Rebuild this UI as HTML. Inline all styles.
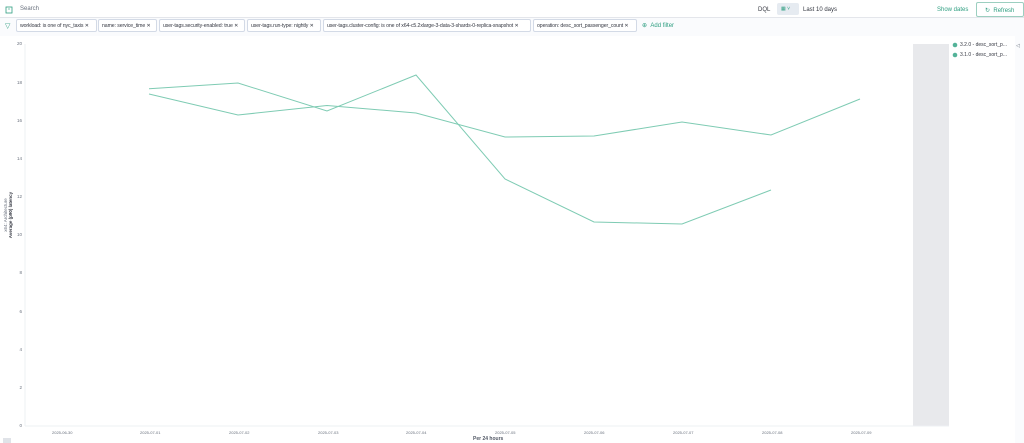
<!DOCTYPE html>
<html><head><meta charset="utf-8"><style>
*{margin:0;padding:0;box-sizing:border-box}
body{width:1024px;height:443px;overflow:hidden;background:#fff;font-family:"Liberation Sans",sans-serif;color:#343741;position:relative}
.top{position:absolute;left:0;top:0;width:1024px;height:18px;border-bottom:1px solid #e4e6eb;background:#fff}
.fil{position:absolute;left:0;top:18px;width:1024px;height:18px;background:#fafbfd}
.pill{position:absolute;top:1px;height:13px;border:1px solid #d3dae6;border-radius:2px;background:#fff;font-size:5.2px;line-height:12px;padding:0 3px;color:#343741;white-space:nowrap;overflow:hidden;letter-spacing:-0.1px}
.t{position:absolute;font-size:6px;white-space:nowrap}
.yl{position:absolute;left:14px;font-size:4.5px;color:#69707d;width:8px;text-align:right}
.xl{position:absolute;top:430px;font-size:4px;color:#69707d}
</style></head><body>
<div class="top">
 <svg style="position:absolute;left:5px;top:6px" width="8" height="8"><rect x="1" y="1" width="6" height="6" fill="none" stroke="#2e9e80" stroke-width="0.8"/><line x1="3" y1="3" x2="5" y2="3" stroke="#2e9e80" stroke-width="0.6"/></svg>
 <div class="t" style="left:20px;top:6px;color:#69707d">Search</div>
 <div class="t" style="left:758px;top:7px;color:#343741">DQL</div>
 <div style="position:absolute;left:777px;top:3px;width:22px;height:12px;background:#e6ebf1;border-radius:2px"></div>
 <div class="t" style="left:781px;top:6px;color:#2e9e80;font-size:5px">▦ ˅</div>
 <div class="t" style="left:803px;top:7px">Last 10 days</div>
 <div class="t" style="left:937px;top:7px;color:#2e9e80">Show dates</div>
 <div style="position:absolute;left:976px;top:2px;width:48px;height:15px;border:1px solid #9ccfc0;border-radius:2px"></div>
 <div class="t" style="left:985px;top:7px;color:#2e9e80">↻ &nbsp;Refresh</div>
</div>
<div class="fil">
 <div class="t" style="left:5px;top:4px;color:#2e9e80;font-size:7px">▽</div>
 <div class="pill" style="left:16px;width:81px">workload: is one of nyc_taxis ✕</div>
 <div class="pill" style="left:98px;width:59px">name: service_time ✕</div>
 <div class="pill" style="left:159px;width:86px">user-tags.security-enabled: true ✕</div>
 <div class="pill" style="left:247px;width:74px">user-tags.run-type: nightly ✕</div>
 <div class="pill" style="left:323px;width:208px">user-tags.cluster-config: is one of x64-c5.2xlarge-3-data-3-shards-0-replica-snapshot ✕</div>
 <div class="pill" style="left:533px;width:104px">operation: desc_sort_passenger_count ✕</div>
 <div class="t" style="left:642px;top:4px;color:#2e9e80">⊕ &nbsp;Add filter</div>
</div>
<div style="position:absolute;left:1015px;top:36px;width:9px;height:407px;background:#fafbfd"></div>
<div class="t" style="left:1016px;top:43px;color:#69707d;font-size:5px">◁</div>
<div class="yl" style="top:41px">20</div><div class="yl" style="top:80px">18</div><div class="yl" style="top:118px">16</div><div class="yl" style="top:156px">14</div><div class="yl" style="top:194px">12</div><div class="yl" style="top:232px">10</div><div class="yl" style="top:270px">8</div><div class="yl" style="top:309px">6</div><div class="yl" style="top:347px">4</div><div class="yl" style="top:385px">2</div><div class="yl" style="top:423px">0</div>
<div style="position:absolute;left:-22px;top:210px;width:60px;transform:rotate(-90deg);text-align:center;font-size:4.5px;line-height:5px;color:#69707d">x64: Architecture<br><b style="color:#343741">Average (p90) latency</b></div>
<div class="xl" style="left:52px">2025-06-30</div><div class="xl" style="left:140px">2025-07-01</div><div class="xl" style="left:229px">2025-07-02</div><div class="xl" style="left:318px">2025-07-03</div><div class="xl" style="left:406px">2025-07-04</div><div class="xl" style="left:495px">2025-07-05</div><div class="xl" style="left:584px">2025-07-06</div><div class="xl" style="left:673px">2025-07-07</div><div class="xl" style="left:762px">2025-07-08</div><div class="xl" style="left:851px">2025-07-09</div>
<div class="t" style="left:473px;top:436px;font-size:5px;font-weight:bold;color:#535966">Per 24 hours</div>
<div style="position:absolute;left:3px;top:438px;width:8px;height:5px;background:#e0e3e8"></div>
<svg style="position:absolute;left:0;top:0" width="1024" height="443">
 <rect x="913" y="44" width="36" height="382" fill="#e8e9ec"/>
 <line x1="25" y1="44" x2="25" y2="426" stroke="#eef0f3" stroke-width="1"/>
 <line x1="25" y1="426" x2="949" y2="426" stroke="#eef0f3" stroke-width="1"/>
 <polyline fill="none" stroke="#7ecbb3" stroke-width="1" points="149,88.7 238,83 327,111 416,75 505,179 594,222 682,224 771,190"/>
 <polyline fill="none" stroke="#7ecbb3" stroke-width="1" points="149,94 238,115 327,105.5 416,113 505,137 594,136 682,122 771,135 860,99"/>
 <circle cx="955" cy="45" r="2.3" fill="#54b399"/>
 <circle cx="955" cy="55" r="2.3" fill="#54b399"/>
</svg>
<div class="t" style="left:960px;top:42px;font-size:5px">3.2.0 - desc_sort_p...</div>
<div class="t" style="left:960px;top:52px;font-size:5px">3.1.0 - desc_sort_p...</div>
</body></html>
